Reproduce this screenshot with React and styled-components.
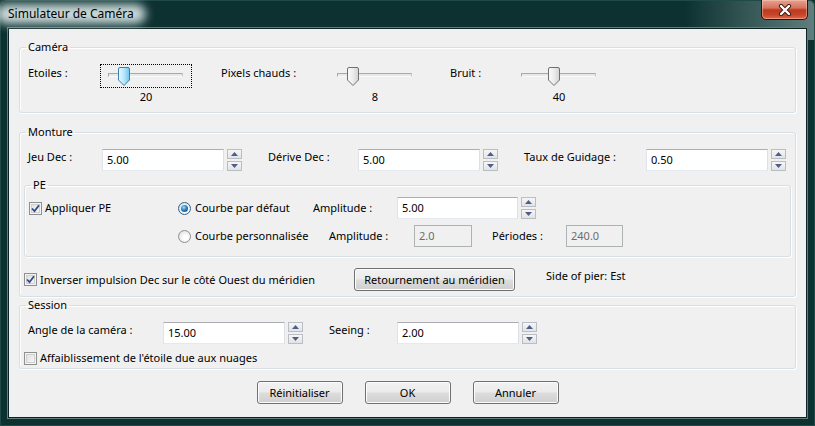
import React from 'react';
import styled, { createGlobalStyle } from 'styled-components';

const GlobalStyle = createGlobalStyle`
  html, body {
    margin: 0;
    padding: 0;
    background: #0d3131;
  }
  body {
    font-family: "Noto Sans", "Open Sans", sans-serif;
    font-size: 11px;
    color: #000;
  }
  #root {
    width: 815px;
    height: 426px;
  }
`;

const Window = styled.div`
  width: 815px;
  height: 426px;
  box-sizing: border-box;
  display: flex;
  flex-direction: column;
  padding: 0 8px 8px 8px;
  border-radius: 6px 6px 0 0;
  background:
    linear-gradient(90deg, rgba(110, 140, 138, 0) 0%, rgba(110, 140, 138, 0) 84%, rgba(110, 140, 138, 0.85) 100%) top / 100% 40px no-repeat,
    #0d3131;
  box-shadow: inset 0 0 0 1px #1f4a48;
`;

const TitleBar = styled.div`
  height: 28px;
  display: flex;
  align-items: flex-start;
  flex: none;
`;

const TitleText = styled.div`
  position: relative;
  isolation: isolate;
  margin: 0 0 0 -8px;
  padding: 6px 22px 6px 8px;
  font-size: 12px;
  line-height: 16px;
  color: #000;

  &::before {
    content: '';
    position: absolute;
    inset: 4px 10px 4px -4px;
    border-radius: 10px;
    background: rgba(226, 238, 238, 0.88);
    filter: blur(5px);
    z-index: -1;
  }
`;

const CloseButton = styled.div`
  margin-left: auto;
  margin-right: -1px;
  width: 47px;
  height: 20px;
  box-sizing: border-box;
  display: flex;
  align-items: center;
  justify-content: center;
  border: 1px solid #3b0d06;
  border-top: none;
  border-radius: 0 0 5px 5px;
  background: linear-gradient(#e6a292 0%, #d5735b 42%, #bf3a1f 52%, #c6452a 78%, #dd6b4b 100%);
  box-shadow: inset 0 0 0 1px rgba(255, 210, 190, 0.45);
`;

const Client = styled.div`
  flex: 1;
  display: flex;
  flex-direction: column;
  background: #f0f0f0;
  border: 1px solid #0a2222;
  box-shadow: 0 0 0 1px #5f7f7d;
  padding: 10px 10px 0 10px;
`;

const Group = styled.fieldset`
  margin: ${p => p.$mt || 0}px 0 0 0;
  padding: ${p => p.$pt || 0}px 4px ${p => p.$pb || 0}px 4px;
  border: 1px solid #d5dfe5;
  border-radius: 3px;
  min-width: 0;
  box-shadow: inset 1px 1px 0 #fff, 1px 1px 0 #fff;
`;

const Legend = styled.legend`
  margin-left: 2px;
  padding: 0 2px;
  line-height: 16px;
  font-size: 11px;
`;

const Row = styled.div`
  display: flex;
  align-items: ${p => p.$align || 'flex-start'};
  gap: ${p => p.$gap || 0}px;
  padding-left: ${p => p.$pl || 0}px;
  margin-top: ${p => p.$mt || 0}px;
  height: ${p => (p.$h ? `${p.$h}px` : 'auto')};
`;

const Label = styled.span`
  flex: none;
  width: ${p => (p.$w ? `${p.$w}px` : 'auto')};
  line-height: 16px;
  margin-top: ${p => p.$mt || 0}px;
  margin-left: ${p => p.$ml || 0}px;
  white-space: nowrap;
`;

const Cell = styled.div`
  flex: none;
  width: ${p => p.$w}px;
  display: flex;
  align-items: center;
`;

/* ---------- slider ---------- */

const CamItem = styled.div`
  display: flex;
  align-items: flex-start;
`;

const SliderCol = styled.div`
  display: flex;
  flex-direction: column;
  width: 92px;
`;

const SliderBox = styled.div`
  position: relative;
  width: 92px;
  height: 24px;
  box-sizing: border-box;
  border: 1px dotted ${p => (p.$focus ? '#000' : 'transparent')};
`;

const Track = styled.div`
  margin: 8px 0 0 7px;
  width: 75px;
  height: 4px;
  box-sizing: border-box;
  border: 1px solid;
  border-color: #a9a9a9 #c8c8c8 #fafafa #a9a9a9;
  background: #e6e9ea;
`;

const Thumb = styled.svg`
  position: absolute;
  top: 2px;
`;

const SliderValue = styled.div`
  text-align: center;
  line-height: 16px;
  margin-top: 1px;
`;

const Slider = ({ pos, value, focus }) => (
  <SliderCol>
    <SliderBox $focus={focus}>
      <Track />
      <Thumb width="12" height="19" viewBox="0 0 12 19" style={{ left: pos }}>
        <defs>
          <linearGradient id="thumbBlue" x1="0" y1="0" x2="1" y2="0">
            <stop offset="0" stopColor="#eaf8fe" />
            <stop offset="0.5" stopColor="#b9e7fa" />
            <stop offset="1" stopColor="#6ac6ee" />
          </linearGradient>
          <linearGradient id="thumbGray" x1="0" y1="0" x2="1" y2="0">
            <stop offset="0" stopColor="#fbfbfb" />
            <stop offset="0.5" stopColor="#ececec" />
            <stop offset="1" stopColor="#d2d2d2" />
          </linearGradient>
        </defs>
        <path
          d="M0.5 2 Q0.5 0.5 2 0.5 H10 Q11.5 0.5 11.5 2 V13 L6 18.5 L0.5 13 Z"
          fill={focus ? 'url(#thumbBlue)' : 'url(#thumbGray)'}
          stroke={focus ? '#3c7fb1' : '#707070'}
        />
      </Thumb>
    </SliderBox>
    <SliderValue>{value}</SliderValue>
  </SliderCol>
);

/* ---------- spin box ---------- */

const SpinWrap = styled.div`
  flex: none;
  display: flex;
  gap: 3px;
  height: 22px;
`;

const TextBox = styled.div`
  width: ${p => p.$w}px;
  height: 22px;
  box-sizing: border-box;
  border: 1px solid;
  border-color: ${p => (p.$disabled ? '#adb2b5' : '#abadb3 #dbdfe6 #e3e9ef #e2e3ea')};
  background: ${p => (p.$disabled ? '#f0f0f0' : '#fff')};
  color: ${p => (p.$disabled ? '#6d6d6d' : '#000')};
  padding: 0 0 0 4px;
  line-height: 20px;
  white-space: nowrap;
`;

const SpinButtons = styled.div`
  display: flex;
  flex-direction: column;
  justify-content: space-between;
  width: 15px;
`;

const SpinBtn = styled.div`
  height: 10px;
  box-sizing: border-box;
  border: 1px solid #b9bdc6;
  background: linear-gradient(#f6f6f6, #e3e3e6);
  display: flex;
  align-items: center;
  justify-content: center;
`;

const Arrow = ({ down }) => (
  <svg width="7" height="4" viewBox="0 0 7 4">
    <path d={down ? 'M0 0 H7 L3.5 4 Z' : 'M0 4 H7 L3.5 0 Z'} fill="#4c5f8c" />
  </svg>
);

const SpinBox = ({ w, value }) => (
  <SpinWrap>
    <TextBox $w={w}>{value}</TextBox>
    <SpinButtons>
      <SpinBtn><Arrow /></SpinBtn>
      <SpinBtn><Arrow down /></SpinBtn>
    </SpinButtons>
  </SpinWrap>
);

/* ---------- check / radio ---------- */

const CheckWrap = styled.label`
  display: flex;
  align-items: center;
  gap: 3px;
  white-space: nowrap;
  line-height: 16px;
`;

const CheckBox = styled.span`
  flex: none;
  width: 13px;
  height: 13px;
  box-sizing: border-box;
  border: 1px solid #8e8f8f;
  display: flex;
  align-items: center;
  justify-content: center;
  box-shadow: inset 0 0 0 1px #f4f4f4, inset 0 0 0 2px #cfcfcf;
  background: linear-gradient(135deg, #dcdcdc, #fbfbfb);
`;

const Check = ({ checked, children }) => (
  <CheckWrap>
    <CheckBox>
      {checked && (
        <svg width="9" height="9" viewBox="0 0 9 9">
          <path d="M1 4.5 L3.5 7.2 L8 1.2" fill="none" stroke="#314a87" strokeWidth="1.8" />
        </svg>
      )}
    </CheckBox>
    {children}
  </CheckWrap>
);

const RadioCircle = styled.span`
  flex: none;
  width: 13px;
  height: 13px;
  box-sizing: border-box;
  border-radius: 50%;
  border: 1px solid ${p => (p.$checked ? '#2c628b' : '#8e8f8f')};
  background: radial-gradient(circle at 60% 60%, #ffffff 20%, #d8d8d8 100%);
  display: flex;
  align-items: center;
  justify-content: center;
`;

const RadioDot = styled.span`
  width: 7px;
  height: 7px;
  border-radius: 50%;
  background: radial-gradient(circle at 40% 35%, #9fe0ff 0%, #2e7fc0 45%, #0f3d6c 100%);
`;

const RadioText = styled.span`
  margin-left: 1px;
`;

const Radio = ({ checked, children }) => (
  <CheckWrap>
    <RadioCircle $checked={checked}>{checked && <RadioDot />}</RadioCircle>
    <RadioText>{children}</RadioText>
  </CheckWrap>
);

/* ---------- push buttons ---------- */

const PushButton = styled.div`
  flex: none;
  width: ${p => p.$w}px;
  height: 23px;
  box-sizing: border-box;
  border: 1px solid #707070;
  border-radius: 3px;
  background: linear-gradient(#f2f2f2 0%, #ebebeb 48%, #dddddd 52%, #cfcfcf 100%);
  box-shadow: inset 0 0 0 1px #fcfcfc;
  display: flex;
  align-items: center;
  justify-content: center;
  white-space: nowrap;
`;

const ButtonBar = styled.div`
  display: flex;
  justify-content: center;
  gap: 22px;
  margin-top: 12px;
`;

const sliders = [
  { label: 'Etoiles :', w: 72, pos: 17, value: 20, focus: true },
  { label: 'Pixels chauds :', w: 108, pos: 17, value: 8 },
  { label: 'Bruit :', w: 63, pos: 34, value: 40 },
];

export default function App() {
  return (
    <>
      <GlobalStyle />
      <Window>
        <TitleBar>
          <TitleText>Simulateur de Caméra</TitleText>
          <CloseButton>
            <svg width="14" height="12" viewBox="0 0 14 12">
              <path d="M3 2 L11 10 M11 2 L3 10" stroke="#3a1a14" strokeWidth="4.2" strokeLinecap="round" />
              <path d="M3 2 L11 10 M11 2 L3 10" stroke="#fff" strokeWidth="2.4" strokeLinecap="round" />
            </svg>
          </CloseButton>
        </TitleBar>
        <Client>
          <Group $pt={9} $pb={7}>
            <Legend>Caméra</Legend>
            <Row $gap={29} $pl={4}>
              {sliders.map(s => (
                <CamItem key={s.label}>
                  <Label $w={s.w} $mt={1}>{s.label}</Label>
                  <Slider pos={s.pos} value={s.value} focus={s.focus} />
                </CamItem>
              ))}
            </Row>
          </Group>

          <Group $mt={11} $pt={9} $pb={5}>
            <Legend>Monture</Legend>
            <Row $pl={4}>
              <Label $w={74}>Jeu Dec :</Label>
              <SpinBox w={122} value="5.00" />
              <Label $w={90} $ml={26}>Dérive Dec :</Label>
              <SpinBox w={122} value="5.00" />
              <Label $w={122} $ml={26}>Taux de Guidage :</Label>
              <SpinBox w={122} value="0.50" />
            </Row>

            <Group $mt={6} $pt={4} $pb={9}>
              <Legend>PE</Legend>
              <Row $align="center" $h={22}>
                <Cell $w={149}><Check checked>Appliquer PE</Check></Cell>
                <Cell $w={135}><Radio checked>Courbe par défaut</Radio></Cell>
                <Label $w={84}>Amplitude :</Label>
                <SpinBox w={121} value="5.00" />
              </Row>
              <Row $align="center" $h={22} $mt={6}>
                <Cell $w={149} />
                <Cell $w={151}><Radio>Courbe personnalisée</Radio></Cell>
                <Label $w={85}>Amplitude :</Label>
                <TextBox $w={58} $disabled>2.0</TextBox>
                <Label $w={74} $ml={20}>Périodes :</Label>
                <TextBox $w={57} $disabled>240.0</TextBox>
              </Row>
            </Group>

            <Row $align="center" $mt={11} $h={23}>
              <Cell $w={330}>
                <Check checked>Inverser impulsion Dec sur le côté Ouest du méridien</Check>
              </Cell>
              <PushButton $w={161}>Retournement au méridien</PushButton>
              <Label $ml={31} $mt={-8}>Side of pier: Est</Label>
            </Row>
          </Group>

          <Group $mt={0} $pt={9} $pb={2}>
            <Legend>Session</Legend>
            <Row $pl={4}>
              <Label $w={135}>Angle de la caméra :</Label>
              <SpinBox w={122} value="15.00" />
              <Label $w={68} $ml={26}>Seeing :</Label>
              <SpinBox w={122} value="2.00" />
            </Row>
            <Row $mt={6}>
              <Check>Affaiblissement de l&apos;étoile due aux nuages</Check>
            </Row>
          </Group>

          <ButtonBar>
            <PushButton $w={86}>Réinitialiser</PushButton>
            <PushButton $w={86}>OK</PushButton>
            <PushButton $w={86}>Annuler</PushButton>
          </ButtonBar>
        </Client>
      </Window>
    </>
  );
}
